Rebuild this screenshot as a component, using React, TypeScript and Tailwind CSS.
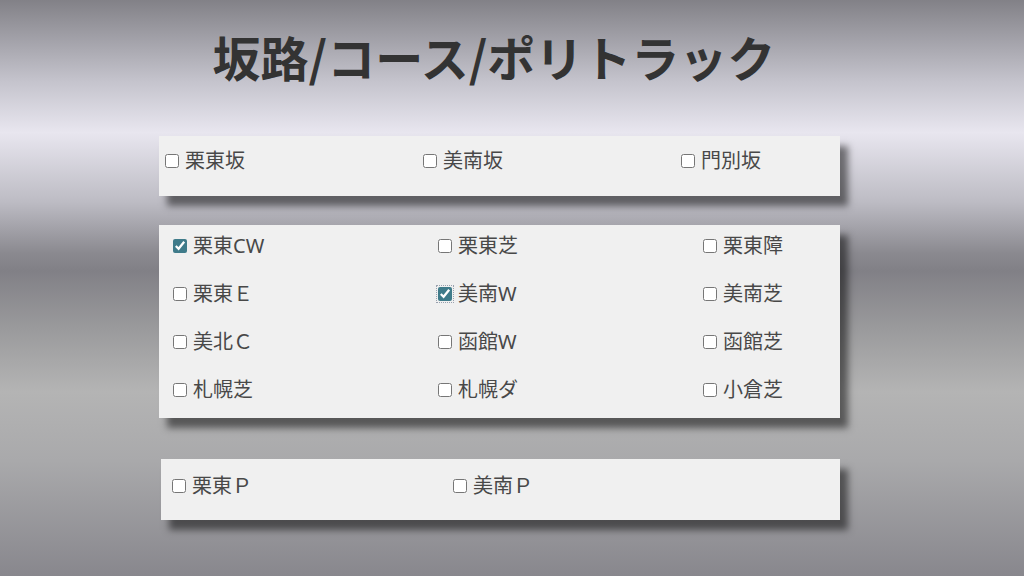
import { useState } from "react";

const slopes = ["栗東坂", "美南坂", "門別坂"];

const courses = [
  "栗東CW", "栗東芝", "栗東障",
  "栗東Ｅ", "美南W", "美南芝",
  "美北Ｃ", "函館W", "函館芝",
  "札幌芝", "札幌ダ", "小倉芝",
];

const polytracks = ["栗東Ｐ", "美南Ｐ"];

function Check({
  label,
  checked,
  focused,
  onToggle,
  width,
}: {
  label: string;
  checked: boolean;
  focused?: boolean;
  onToggle: () => void;
  width: string;
}) {
  return (
    <label className={`flex h-6 shrink-0 cursor-pointer items-center gap-[6px] ${width}`}>
      <input
        type="checkbox"
        checked={checked}
        onChange={onToggle}
        className={`h-[14px] w-[14px] shrink-0 accent-[#3f7b8a] ${
          focused ? "outline-1 outline-offset-1 outline-dotted outline-gray-400" : ""
        }`}
      />
      <span className="text-[20px] leading-6 whitespace-nowrap text-[#484848]">{label}</span>
    </label>
  );
}

export default function App() {
  const [selected, setSelected] = useState<Record<string, boolean>>({
    栗東CW: true,
    美南W: true,
  });

  const toggle = (k: string) => setSelected((s) => ({ ...s, [k]: !s[k] }));

  return (
    <div
      className="h-[576px] w-[1024px] overflow-hidden bg-[linear-gradient(to_bottom,#828187_0%,#c4c3cc_14%,#e8e6ef_23%,#bdbcc4_35%,#8a898f_44%,#818086_47%,#9a9a9c_57%,#b4b4b4_68%,#a9a9ab_80%,#88878d_100%)]"
      style={{ fontFamily: '"Noto Sans", "Noto Sans CJK JP", sans-serif' }}
    >
      <div className="pt-[30px] pr-[36px] text-center">
        <h1
          className="text-[48px] leading-[52px] font-bold text-[#333]"
          style={{ fontFamily: '"Noto Sans CJK JP", "Noto Sans", sans-serif' }}
        >
          坂路/コース/ポリトラック
        </h1>
      </div>

      <div className="ml-[159px] flex w-[681px] flex-col">
        <div className="mt-[54px] flex h-[60px] bg-[#f0f0f0] pt-[13px] pl-[6px] shadow-[8px_10px_7px_rgba(0,0,0,0.5)]">
          {slopes.map((s) => (
            <Check key={s} label={s} checked={!!selected[s]} onToggle={() => toggle(s)} width="w-[258px]" />
          ))}
        </div>

        <div className="mt-[29px] grid h-[193px] grid-cols-[265px_265px_137px] content-start gap-y-[24px] bg-[#f0f0f0] pt-[9px] pl-[14px] shadow-[8px_10px_7px_rgba(0,0,0,0.5)]">
          {courses.map((c) => (
            <Check
              key={c}
              label={c}
              checked={!!selected[c]}
              focused={c === "美南W"}
              onToggle={() => toggle(c)}
              width="w-auto"
            />
          ))}
        </div>

        <div className="mt-[41px] ml-[2px] flex h-[61px] bg-[#f0f0f0] pt-[15px] pl-[11px] shadow-[8px_10px_7px_rgba(0,0,0,0.5)]">
          {polytracks.map((p) => (
            <Check key={p} label={p} checked={!!selected[p]} onToggle={() => toggle(p)} width="w-[281px]" />
          ))}
        </div>
      </div>
    </div>
  );
}
